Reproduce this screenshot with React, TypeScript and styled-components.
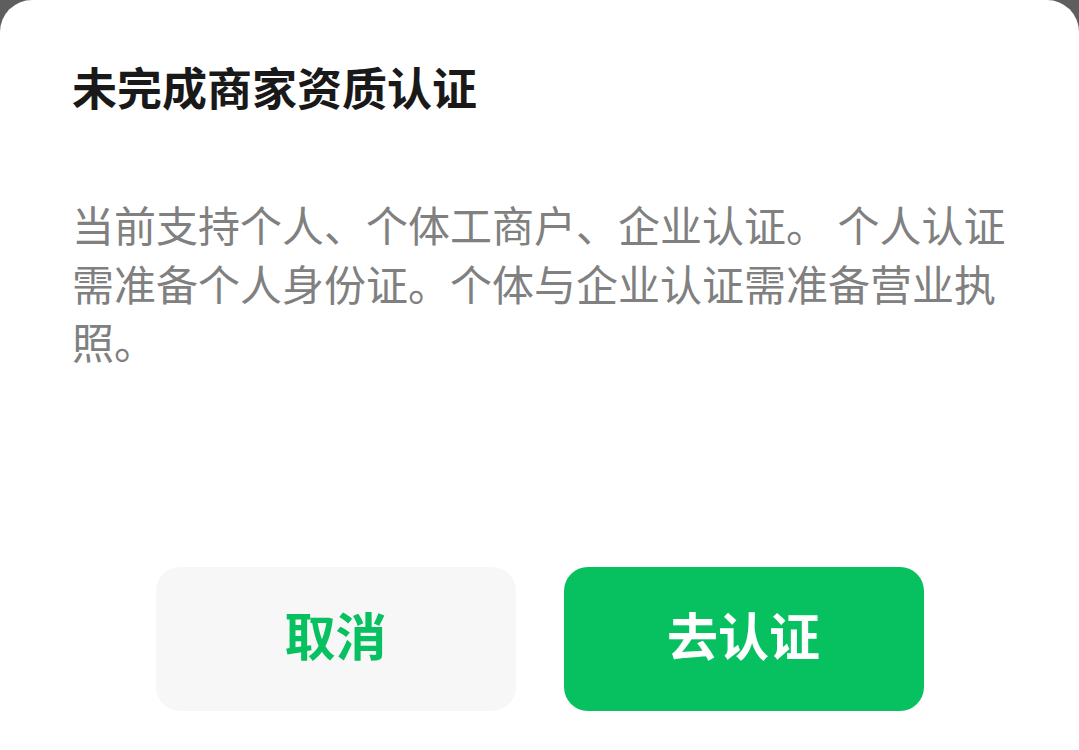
import React from 'react'
import styled, { createGlobalStyle } from 'styled-components'

const GlobalStyle = createGlobalStyle`
  html, body {
    margin: 0;
    padding: 0;
    background: #5e5e5e;
    font-family: 'Noto Sans CJK SC', 'Noto Sans', sans-serif;
  }
`

const Sheet = styled.div`
  box-sizing: border-box;
  height: 750px;
  background: #ffffff;
  border-radius: 32px 32px 0 0;
  display: flex;
  flex-direction: column;
  padding: 52px 57px 39px 72px;
`

const Title = styled.h1`
  margin: 0;
  font-size: 45px;
  line-height: 70px;
  font-weight: 700;
  color: #191919;
`

const Body = styled.p`
  margin: 73px 0 0 0;
  font-size: 42px;
  line-height: 58.5px;
  color: #808080;
`

const Footer = styled.div`
  margin-top: auto;
  margin-left: -72px;
  margin-right: -57px;
  display: flex;
  justify-content: center;
  gap: 48px;
`

const Button = styled.button<{ primary?: boolean }>`
  box-sizing: border-box;
  width: 360px;
  height: 144px;
  padding: 0 0 10px 0;
  border: none;
  border-radius: 24px;
  font-family: inherit;
  font-size: 51px;
  font-weight: 700;
  background: ${({ primary }) => (primary ? '#07c160' : '#f7f7f7')};
  color: ${({ primary }) => (primary ? '#ffffff' : '#07c160')};
  cursor: pointer;
`

export default function App() {
  return (
    <>
      <GlobalStyle />
      <Sheet>
        <Title>未完成商家资质认证</Title>
        <Body>当前支持个人、个体工商户、企业认证。 个人认证需准备个人身份证。个体与企业认证需准备营业执照。</Body>
        <Footer>
          <Button>取消</Button>
          <Button primary>去认证</Button>
        </Footer>
      </Sheet>
    </>
  )
}
